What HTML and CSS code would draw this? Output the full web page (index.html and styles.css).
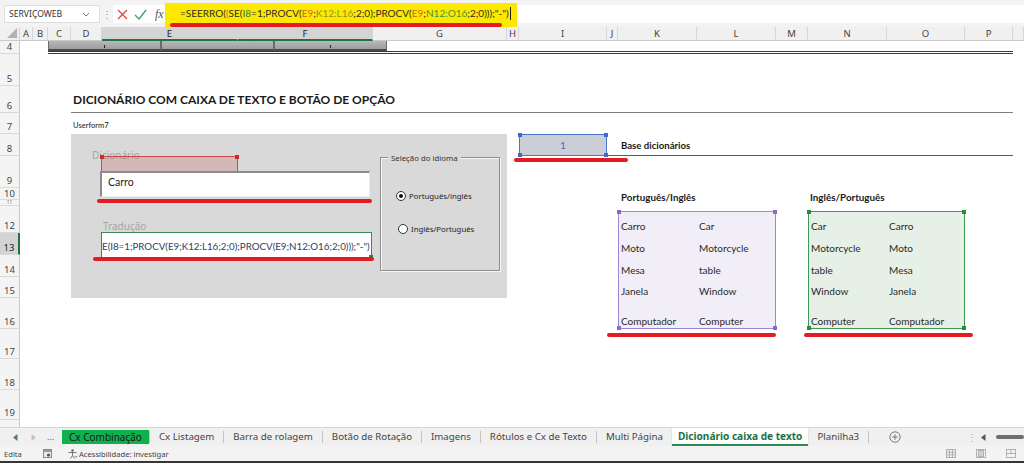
FILE: index.html
```html
<!DOCTYPE html>
<html lang="pt-BR">
<head>
<meta charset="utf-8">
<title>Dicionário caixa de texto</title>
<link rel="stylesheet" href="styles.css">
</head>
<body>
<div class="app">
  <div class="fbar">
    <div class="namebox"><span>SERVIÇOWEB</span><svg width="8" height="5" viewBox="0 0 8 5"><path d="M1 1l3 3 3-3" fill="none" stroke="#777" stroke-width="1"/></svg></div>
    <div class="vdots">⋮</div>
    <div class="ficons">
      <svg width="11" height="11" viewBox="0 0 11 11"><path d="M1 1L10 10M10 1L1 10" stroke="#e5484d" stroke-width="1.4"/></svg>
      <svg width="13" height="11" viewBox="0 0 13 11"><path d="M1 6l4 4 7-9" fill="none" stroke="#3fa463" stroke-width="1.4"/></svg>
      <span class="fx">fx</span>
    </div>
    <div class="formula"><span class="ftext">=SEERRO(<span class="c2">(</span>SE(<span class="c1">I8</span>=1;PROCV(<span class="c2">E9</span>;<span class="c3">K12:L16</span>;2;0);PROCV(<span class="c2">E9</span>;<span class="c4">N12:O16</span>;2;0)));"-")</span><span class="caret"></span><i class="mark mark-formula"></i></div>
    <div class="frest"></div>
  </div>

  <div class="sheet">
    <div class="ch corner"><svg width="10" height="10" viewBox="0 0 10 10"><path d="M10 0V10H0Z" fill="#b3b3b3"/></svg></div>
    <div class="ch">A</div><div class="ch">B</div><div class="ch">C</div><div class="ch">D</div>
    <div class="ch sel">E</div><div class="ch sel">F</div><div class="ch">G</div><div class="ch">H</div>
    <div class="ch">I</div><div class="ch">J</div><div class="ch">K</div><div class="ch">L</div>
    <div class="ch">M</div><div class="ch">N</div><div class="ch">O</div><div class="ch">P</div><div class="ch"></div>

    <div class="rh">4</div><div class="rh">5</div><div class="rh">6</div><div class="rh">7</div>
    <div class="rh">8</div><div class="rh">9</div><div class="rh rh-short">10</div><div class="rh rh-thin">11</div>
    <div class="rh">12</div><div class="rh sel">13</div><div class="rh">14</div><div class="rh">15</div>
    <div class="rh">16</div><div class="rh">17</div><div class="rh">18</div><div class="rh">19</div><div class="rh"></div>

    <div class="rule4"></div>
    <div class="btns"><div class="btn"><i class="tick"></i></div><div class="btn"></div><div class="btn"><i class="tick"></i></div></div>

    <div class="title">DICIONÁRIO COM CAIXA DE TEXTO E BOTÃO DE OPÇÃO</div>
    <div class="ufname">Userform7</div>

    <div class="uf">
      <div class="uf-left">
        <div class="uf-lbl">Dicionário</div>
        <div class="e9hl"><i class="hd tl"></i><i class="hd tr"></i></div>
        <div class="uf-tb">Carro</div>
        <div class="uf-lbl uf-lbl2">Tradução</div>
        <div class="uf-tb2"><span>E(I8=1;PROCV(E9;K12:L16;2;0);PROCV(E9;N12:O16;2;0)));"-")</span><i class="hd br"></i></div>
        <i class="mark mark-tb"></i>
        <i class="mark mark-tb2"></i>
      </div>
      <div class="uf-frame">
        <span class="legend">Seleção do idioma</span>
        <div class="radio on"><span class="dot"></span>Português/inglês</div>
        <div class="radio r2"><span class="dot"></span>Inglês/Português</div>
      </div>
    </div>

    <div class="i8">1<i class="hd tl"></i><i class="hd tr"></i><i class="hd bl"></i><i class="hd br"></i><i class="mark mark-i8"></i></div>
    <div class="base">Base dicionários</div>

    <div class="dh dh1">Português/Inglês</div>
    <div class="dh dh2">Inglês/Português</div>

    <div class="dict purple">
      <span>Carro</span><span>Car</span>
      <span>Moto</span><span>Motorcycle</span>
      <span>Mesa</span><span>table</span>
      <span>Janela</span><span>Window</span>
      <span>Computador</span><span>Computer</span>
      <i class="hd tl"></i><i class="hd tr"></i><i class="hd bl"></i><i class="hd br"></i>
      <i class="mark mark-dict1"></i>
    </div>
    <div class="dict green">
      <span>Car</span><span>Carro</span>
      <span>Motorcycle</span><span>Moto</span>
      <span>table</span><span>Mesa</span>
      <span>Window</span><span>Janela</span>
      <span>Computer</span><span>Computador</span>
      <i class="hd tl"></i><i class="hd tr"></i><i class="hd bl"></i><i class="hd br"></i>
      <i class="mark mark-dict2"></i>
    </div>
  </div>

  <div class="tabs">
    <div class="tabnav">
      <svg width="5" height="7" viewBox="0 0 5 7"><path d="M4.5 0V7L0 3.5Z" fill="#4f7f60"/></svg>
      <svg width="5" height="7" viewBox="0 0 5 7"><path d="M0.5 0V7L5 3.5Z" fill="#c4c4c4"/></svg>
      <span class="ell">...</span>
    </div>
    <div class="tab tab-green">Cx Combinação</div><span class="tsep"></span>
    <div class="tab">Cx Listagem</div><span class="tsep"></span>
    <div class="tab">Barra de rolagem</div><span class="tsep"></span>
    <div class="tab">Botão de Rotação</div><span class="tsep"></span>
    <div class="tab">Imagens</div><span class="tsep"></span>
    <div class="tab">Rótulos e Cx de Texto</div><span class="tsep"></span>
    <div class="tab">Multi Página</div>
    <div class="tab tab-active">Dicionário caixa de texto</div>
    <div class="tab">Planilha3</div><span class="tsep"></span>
    <svg class="addsheet" width="12" height="12" viewBox="0 0 12 12"><circle cx="6" cy="6" r="5.2" fill="none" stroke="#7a7a7a"/><path d="M6 3.2v5.6M3.2 6h5.6" stroke="#7a7a7a"/></svg>
    <div class="fill"></div>
    <span class="tvd">⋮</span>
    <svg width="5" height="7" viewBox="0 0 5 7"><path d="M4.5 0V7L0 3.5Z" fill="#555"/></svg>
    <div class="thumb"></div>
  </div>

  <div class="status">
    <span class="st-mode">Edita</span>
    <svg class="st-macro" width="9" height="9" viewBox="0 0 9 9"><rect x=".5" y=".5" width="8" height="8" fill="#ececec" stroke="#8a8a8a"/><rect x="1" y="1" width="7" height="2" fill="#9a9a9a"/><circle cx="5.5" cy="6" r="1.6" fill="#555"/></svg>
    <svg class="st-acc" width="11" height="10" viewBox="0 0 11 10"><circle cx="5.5" cy="1.5" r="1.2" fill="#666"/><path d="M1.5 3.5h8M5.5 3.5v3M5.5 6.5l-2 3M5.5 6.5l2 3" stroke="#666" fill="none" stroke-width=".9"/><path d="M9 6.5l.5 1 1 .3-1 .3-.5 1-.5-1-1-.3 1-.3z" fill="#666"/></svg>
    <span>Acessibilidade: investigar</span>
    <div class="fill"></div>
    <svg width="10" height="9" viewBox="0 0 10 9"><rect x=".5" y=".5" width="9" height="8" fill="none" stroke="#b0b0b0"/><path d="M.5 3.2h9M.5 5.8h9M3.5 .5v8M6.5 .5v8" stroke="#b0b0b0"/></svg>
    <svg width="10" height="9" viewBox="0 0 10 9"><rect x=".5" y=".5" width="9" height="8" fill="none" stroke="#b0b0b0"/><rect x="2.5" y="1.5" width="5" height="6" fill="#d0d0d0" stroke="#b0b0b0"/></svg>
    <svg width="10" height="9" viewBox="0 0 10 9"><rect x=".5" y=".5" width="9" height="8" fill="none" stroke="#b0b0b0"/><path d="M.5 4.5h9M5 .5v4" stroke="#b0b0b0"/></svg>
  </div>
  <div class="bottom"></div>
</div>
</body>
</html>
```

FILE: styles.css
```css
html, body { margin: 0; padding: 0; background: #fff; }
.app {
  width: 1024px; height: 463px; overflow: hidden;
  display: flex; flex-direction: column;
  font-family: "Noto Sans", "Open Sans", sans-serif;
  color: #333;
}

/* ---------- formula bar ---------- */
.fbar { height: 27px; flex: none; display: flex; background: #f3f3f3; }
.namebox {
  margin: 5px 0 4px 4px; width: 96px; box-sizing: border-box;
  background: #fff; border: 1px solid #dedede;
  display: flex; align-items: center; justify-content: space-between;
  padding: 0 9px 0 4px; font-size: 8.6px; color: #333;
}
.vdots { width: 13px; display: flex; align-items: center; justify-content: center; color: #9a9a9a; font-size: 10px; }
.ficons {
  margin: 5px 0 4px 0; width: 52px; background: #fff;
  display: flex; align-items: center; padding-left: 4px; gap: 6px; box-sizing: border-box;
}
.fx { font: italic 12px "Liberation Serif", serif; color: #555; margin-left: 2px; }
.formula {
  width: 352px; margin-top: 3px; background: #fde900; position: relative;
  padding: 4px 0 0 15px; box-sizing: border-box; display: flex; align-items: flex-start;
  font: 10px/12px Lato, sans-serif; color: #2b2b2b; white-space: nowrap;
}
.c1 { color: #2f7a6a; }
.c2 { color: #d9621a; }
.c3 { color: #8c9130; }
.c4 { color: #3a9a3a; }
.caret { width: 1px; height: 13px; background: #222; margin-left: 1px; }
.frest { flex: 1; margin: 5px 0 4px; background: #fff; }

.mark { position: absolute; display: block; height: 4px; background: #e41b23; border-radius: 2px; }
.mark-formula { left: 5px; top: 20px; width: 332px; }

/* ---------- sheet grid ---------- */
.sheet {
  flex: none; height: 400px; overflow: hidden; position: relative;
  display: grid;
  grid-template-columns: 20px 13px 15px 23px 31px 136px 135px 134px 12px 88px 11px 79px 79px 32px 79px 78px 48px 11px;
  grid-template-rows: 14px 13px 32px 27px 21px 22px 32px 12px 6px 27px 22px 22px 21px 31px 30px 31px 30px 30px;
  font-family: Lato, sans-serif;
}
.ch {
  grid-row: 1; background: #f0f0f0; box-sizing: border-box;
  border-right: 1px solid #d6d6d6; border-bottom: 1px solid #c9c9c9;
  display: flex; align-items: center; justify-content: center;
  font: 9.5px "Noto Sans", sans-serif; color: #444;
}
.ch.corner { grid-column: 1; justify-content: flex-end; align-items: flex-end; padding: 0 2px 2px 0; }
.ch.sel { background: #d4d4d4; color: #222; border-bottom: 2px solid #217346; }
.rh {
  grid-column: 1; background: #f4f4f4; box-sizing: border-box; overflow: hidden;
  border-right: 1px solid #c9c9c9; border-bottom: 1px solid #dadada;
  display: flex; align-items: flex-end; justify-content: center; padding-bottom: 1px;
  font: 9.5px/11px "Noto Sans", sans-serif; color: #444;
}
.rh.rh-short { padding-bottom: 0; line-height: 11px; }
.rh.rh-thin { font-size: 5px; line-height: 5px; padding-bottom: 0; color: #777; }
.rh.sel { background: #d4d4d4; color: #222; border-right: 2px solid #217346; }

.rule4 { grid-column: 4 / 18; grid-row: 2; border-bottom: 3px double #3a3a3a; }
.btns { grid-column: 4 / 9; grid-row: 2; display: flex; height: 10px; align-self: start; }
.btn {
  width: 113px; box-sizing: border-box;
  background: linear-gradient(#b8b8b8, #9d9d9d);
  border: 1px solid #6a6a6a; border-top: none; border-bottom: 2px solid #4a4a4a;
  display: flex; justify-content: center; align-items: flex-end;
}
.tick { display: block; width: 1px; height: 3px; background: #222; margin-bottom: 1px; }

.title {
  grid-column: 5 / 18; grid-row: 4; border-bottom: 1px solid #7f7f7f;
  display: flex; align-items: flex-end; padding: 0 0 5px 2px;
  font: 700 12px/14px Lato, sans-serif; color: #1a1a1a;
}
.ufname { grid-column: 5 / 9; grid-row: 5; display: flex; align-items: center; padding: 2px 0 0 2px; font-size: 7.6px; color: #222; }

/* ---------- userform ---------- */
.uf {
  grid-column: 5 / 9; grid-row: 6 / 14; background: #d9d9d9;
  display: flex; align-items: flex-start; padding: 15px 0 0 21px; box-sizing: border-box;
}
.uf-left { width: 280px; display: flex; flex-direction: column; align-items: flex-start; position: relative; flex: none; }
.uf-lbl { font: 10px/12px "Noto Sans", sans-serif; color: #a5a5a5; height: 12px; }
.uf-lbl2 { margin: 23px 0 0 11px; }
.e9hl {
  position: absolute; left: 9px; top: 7px; width: 137px; height: 15px; box-sizing: border-box;
  border: 1px solid #c94a4a; border-bottom: none; background: rgba(196, 70, 70, 0.22);
  color: #c03030;
}
.uf-tb {
  margin: 10px 0 0 8px; width: 270px; height: 26px; box-sizing: border-box; background: #fff;
  border-top: 2px solid #8c8c8c; border-left: 2px solid #8c8c8c;
  border-right: 1px solid #ececec; border-bottom: 1px solid #ececec;
  padding: 3px 0 0 6px; font: 10.5px/13px Lato, sans-serif; color: #1e1e1e;
}
.uf-tb2 {
  margin-left: 9px; width: 271px; height: 26px; box-sizing: border-box; background: #fff;
  border: 1px solid #3c8a5a; position: relative; color: #2f7a4a;
  padding-top: 7px; white-space: nowrap;
}
.uf-tb2 span {
  display: block; overflow: hidden;
  font: 9.75px/12px Lato, sans-serif; color: #2c4262;
}
.mark-tb { left: 5px; top: 50px; width: 275px; }
.mark-tb2 { left: 1px; top: 108px; width: 281px; }

.uf-frame {
  margin: 8px 0 0 8px; width: 120px; height: 114px; box-sizing: border-box; position: relative; flex: none;
  border: 1px solid #8e8e8e; box-shadow: inset 1px 1px 0 #f6f6f6, 1px 1px 0 #f6f6f6;
  padding: 32px 0 0 15px;
  font: 7.8px/12px "Noto Sans", sans-serif; color: #222;
}
.legend { position: absolute; left: 7px; top: -6px; padding: 0 3px; background: #d9d9d9; color: #333; }
.radio { display: flex; align-items: center; gap: 3px; height: 12px; }
.radio.r2 { margin: 21px 0 0 2px; }
.dot {
  width: 10px; height: 10px; box-sizing: border-box; border-radius: 50%;
  border: 1px solid #333; background: #fff; display: flex; align-items: center; justify-content: center;
}
.radio.on .dot::after { content: ""; width: 4px; height: 4px; border-radius: 50%; background: #111; }

/* ---------- highlighted ranges ---------- */
.hd { position: absolute; display: block; width: 4px; height: 4px; background: currentColor; }
.hd.tl { left: -2px; top: -2px; }
.hd.tr { right: -2px; top: -2px; }
.hd.bl { left: -2px; bottom: -2px; }
.hd.br { right: -2px; bottom: -2px; }

.i8 {
  grid-column: 10; grid-row: 6; position: relative; box-sizing: border-box;
  background: #cbced6; border: 1px solid #4a76c8; color: #3f6bc4;
  display: flex; align-items: center; justify-content: center;
  font: 9.5px Lato, sans-serif;
}
.i8::first-line { color: #222; }
.mark-i8 { left: -6px; top: 23px; width: 114px; }

.base {
  grid-column: 11 / 18; grid-row: 6; border-bottom: 1px solid #5a5a5a;
  display: flex; align-items: center; padding: 1px 0 0 14px;
  font: 700 9.6px Lato, sans-serif; color: #1a1a1a;
}
.dh { grid-row: 7 / 10; align-self: end; padding: 0 0 3px 3px; font: 700 9.8px/12px Lato, sans-serif; color: #1a1a1a; }
.dh1 { grid-column: 12 / 14; }
.dh2 { grid-column: 15 / 17; padding-left: 2px; }

.dict {
  grid-row: 10 / 15; margin-top: 5px; position: relative; box-sizing: border-box;
  display: grid; grid-template-columns: 78px 1fr; grid-template-rows: 21px 22px 22px 21px 30px;
  border: 1px solid; font: 10px/12px Lato, sans-serif;
}
.dict span { display: flex; align-items: flex-end; padding: 0 0 1px 2px; color: #2a2a2a; }
.dict.purple { grid-column: 12 / 14; background: #f1eef8; border-color: #9f85d8; color: #8a68cc; }
.dict.green { grid-column: 15 / 17; background: #e6f0e6; border-color: #3a9a4e; color: #2a8a3e; }
.mark-dict1 { left: -12px; top: 121px; width: 169px; }
.mark-dict2 { left: -5px; top: 121px; width: 169px; }

/* ---------- sheet tabs ---------- */
.tabs {
  height: 19px; flex: none; display: flex; align-items: center; box-sizing: border-box;
  background: #f0f0f0; border-top: 1px solid #d6d6d6;
  font: 9.7px/12px "Noto Sans", sans-serif; color: #444;
}
.tabnav { width: 62px; flex: none; display: flex; align-items: center; gap: 13px; padding-left: 13px; box-sizing: border-box; }
.ell { color: #666; font-size: 9px; margin-left: -2px; }
.tab { padding: 0 9px; white-space: nowrap; height: 18px; display: flex; align-items: center; box-sizing: border-box; }
.tab-green { background: #10b04e; color: #1a1a1a; padding: 0 7px; height: 14px; font-size: 10px; }
.tab-active {
  background: #fff; color: #1e7145; font-weight: 700; padding: 0 6px; font-size: 10.1px;
  border-bottom: 2px solid #2b8a55; box-shadow: 0 0 0 0.5px #dcdcdc;
}
.tsep { width: 1px; height: 12px; background: #c4c4c4; flex: none; }
.addsheet { margin-left: 20px; }
.fill { flex: 1; }
.tvd { color: #aaa; font-size: 10px; margin-right: 4px; }
.thumb { width: 28px; height: 4px; background: #6e6e6e; border-radius: 2px; margin-left: 10px; }

/* ---------- status bar ---------- */
.status {
  height: 15px; flex: none; display: flex; align-items: center; background: #f3f3f3;
  font: 7.6px/10px "Noto Sans", sans-serif; color: #444; padding: 0 8px 0 4px; box-sizing: border-box;
}
.st-mode { width: 39px; }
.st-macro { margin-right: 15px; }
.st-acc { margin-right: 1px; }
.status svg:nth-last-of-type(-n+3) { margin-left: 20px; }
.bottom { height: 2px; flex: none; background: #353535; }
```
